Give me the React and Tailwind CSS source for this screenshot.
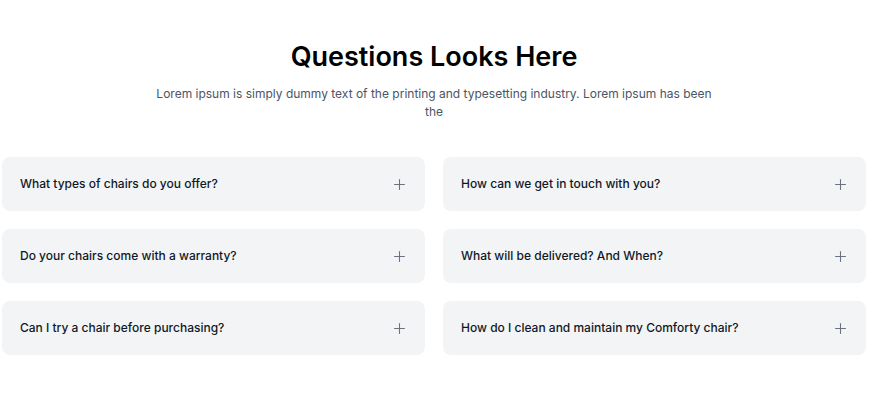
import { Plus } from 'lucide-react'

const faqs = [
  'What types of chairs do you offer?',
  'How can we get in touch with you?',
  'Do your chairs come with a warranty?',
  'What will be delivered? And When?',
  'Can I try a chair before purchasing?',
  'How do I clean and maintain my Comforty chair?',
]

export default function App() {
  return (
    <div className="min-h-screen bg-white" style={{ fontFamily: 'Inter, "Noto Sans", sans-serif' }}>
      <div className="w-[868px] px-[2px] pt-[39px]">
        <h1 className="text-center text-[27px] leading-9 font-semibold text-black">Questions Looks Here</h1>
        <p className="mx-auto mt-[10px] max-w-[564px] text-center text-[12px] leading-[18px] text-gray-600">
          Lorem ipsum is simply dummy text of the printing and typesetting industry. Lorem ipsum has been the
        </p>
        <div className="mt-[36px] grid grid-cols-2 gap-x-[18px] gap-y-[18px]">
          {faqs.map((q) => (
            <button
              key={q}
              className="flex h-[54px] items-center justify-between rounded-lg bg-gray-100 pl-[18px] pr-[17px] text-left"
            >
              <span className="text-[12px] font-medium text-gray-900">{q}</span>
              <Plus size={17} strokeWidth={1.5} className="text-gray-500" />
            </button>
          ))}
        </div>
      </div>
    </div>
  )
}
